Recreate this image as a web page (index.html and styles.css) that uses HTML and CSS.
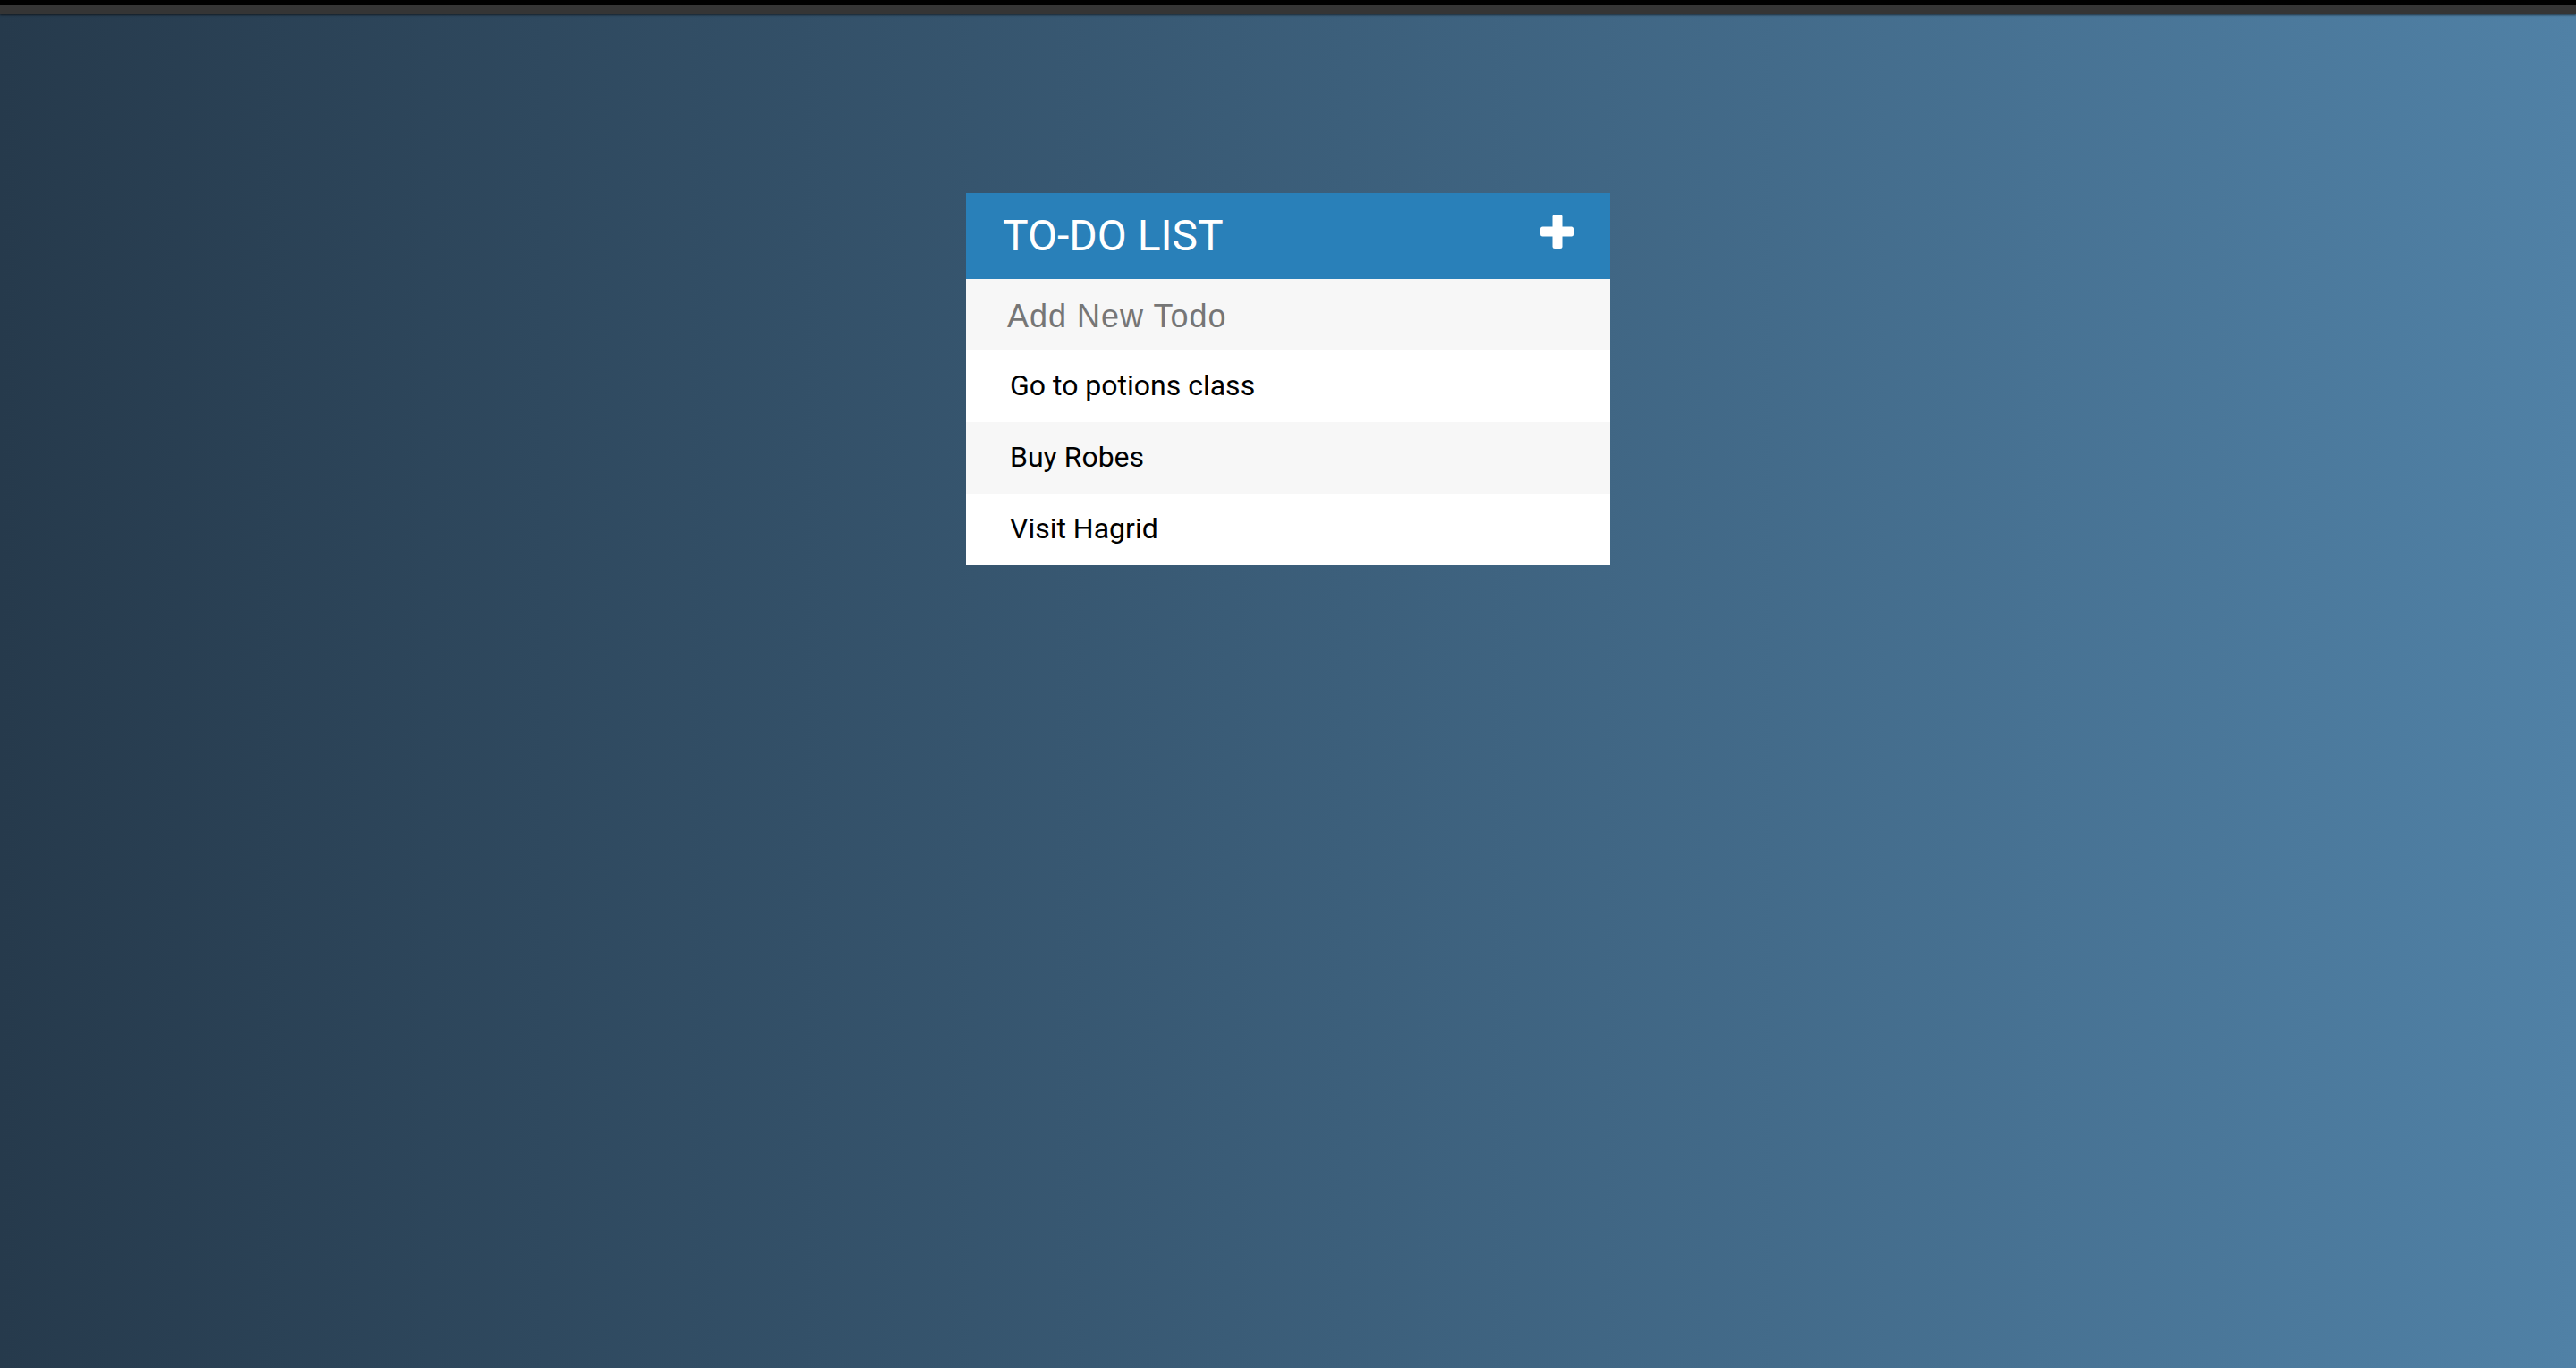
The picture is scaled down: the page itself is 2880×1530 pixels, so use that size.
FILE: index.html
```html
<!DOCTYPE html>
<html>
<head>
<meta charset="utf-8">
<link rel="stylesheet" href="styles.css">
</head>
<body>
<div class="topbar"></div>
<main class="stage">
  <section class="todo">
    <header class="todo-head">
      <h1 class="todo-title">TO-DO LIST</h1>
      <span class="todo-add">
        <svg width="38" height="38" viewBox="0 0 38 38"><rect x="13.5" y="0" width="11" height="38" rx="2.5" fill="#fff"/><rect x="0" y="13.5" width="38" height="11" rx="2.5" fill="#fff"/></svg>
      </span>
    </header>
    <div class="todo-input">Add New Todo</div>
    <ul class="todo-list">
      <li class="todo-item">Go to potions class</li>
      <li class="todo-item">Buy Robes</li>
      <li class="todo-item">Visit Hagrid</li>
    </ul>
  </section>
</main>
</body>
</html>
```
FILE: styles.css
```css
html, body {
  margin: 0;
  padding: 0;
  height: 100%;
}
body {
  background: linear-gradient(to right, #263a4c, #5081a6);
  font-family: Roboto, "Liberation Sans", sans-serif;
  overflow: hidden;
}
.topbar {
  height: 10px;
  border-top: 6px solid #000;
  background: #353535;
  box-shadow: 0 1px 2px rgba(0,0,0,0.6);
}
.stage {
  display: flex;
  justify-content: center;
  padding-top: 200px;
}
.todo {
  width: 720px;
}
.todo-head {
  height: 96px;
  background: #2980b9;
  display: flex;
  align-items: center;
  justify-content: space-between;
  padding: 0 40px 0 41px;
  box-sizing: border-box;
}
.todo-title {
  margin: 0;
  font-weight: 400;
  font-size: 48px;
  color: #fff;
  line-height: 1;
  position: relative;
  top: 0;
}
.todo-add {
  display: flex;
  position: relative;
  top: -5px;
}
.todo-input {
  height: 80px;
  box-sizing: border-box;
  background: #f7f7f7;
  color: #767676;
  font-family: "Liberation Sans", Arial, sans-serif;
  font-size: 36px;
  letter-spacing: 1px;
  display: flex;
  align-items: center;
  padding: 3px 0 0 46px;
}
.todo-list {
  list-style: none;
  margin: 0;
  padding: 0;
}
.todo-item {
  height: 80px;
  box-sizing: border-box;
  display: flex;
  align-items: center;
  padding: 0 0 3px 49px;
  font-size: 32px;
  color: #000;
  background: #fff;
}
.todo-item:nth-child(even) {
  background: #f7f7f7;
}
```
